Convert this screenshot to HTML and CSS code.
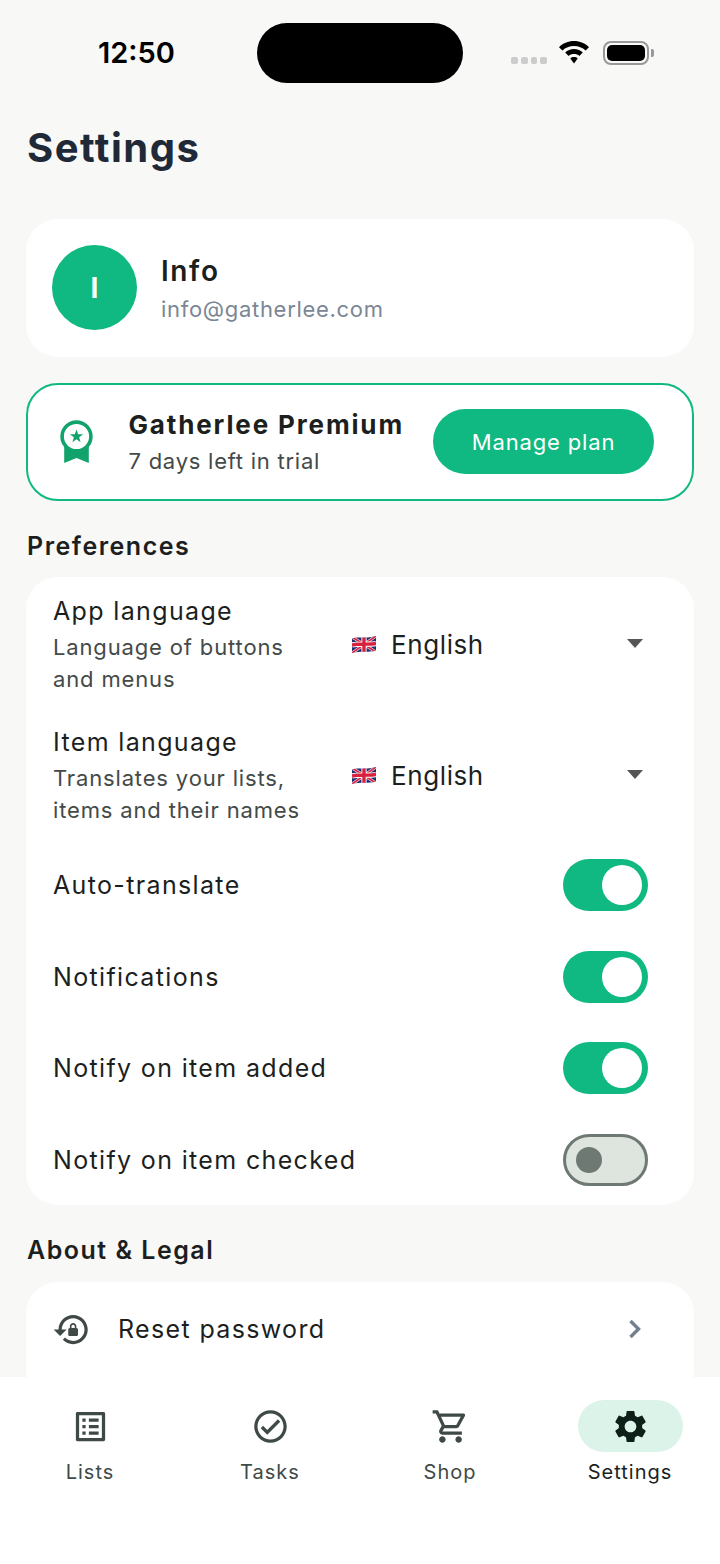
FILE: index.html
```html
<!DOCTYPE html>
<html lang="en">
<head>
  <meta charset="UTF-8">
  <title>Settings</title>
  <link rel="stylesheet" href="styles.css">
</head>
<body>
<div class="screen">
  <div class="content">
    <div class="statusBar">
      <div class="time">12:50</div>
      <div class="island"></div>
      <div class="signal"><i></i><i></i><i></i><i></i></div>
      <svg class="wifi" viewBox="0 0 32 23" width="32" height="23">
        <path d="M16 0C10 0 4.800 2.300 1 6.200l3.400 3.400C7.500 6.600 11.500 5 16 5s8.500 1.600 11.600 4.600L31 6.200C27.200 2.300 22 0 16 0z"/>
        <path d="M16 8c-3.500 0-6.500 1.300-8.800 3.500l3.400 3.400C12 13.600 13.900 13 16 13s4 .6 5.400 1.900l3.400-3.400C22.500 9.300 19.500 8 16 8z"/>
        <path d="M16 16c-1.500 0-2.800.5-3.700 1.400l3.700 5.100 3.700-5.100C18.800 16.500 17.500 16 16 16z"/>
      </svg>
      <div class="battery"><div class="batteryFill"></div></div>
      <div class="batteryCap"></div>
    </div>

    <h1 class="pageTitle">Settings</h1>

    <div class="card profile">
      <div class="avatar">I</div>
      <div>
        <div class="profileName">Info</div>
        <div class="profileMail">info@gatherlee.com</div>
      </div>
    </div>

    <div class="premium">
      <svg class="medal" viewBox="0 0 33 43" width="33" height="43">
        <path fill="#12a36c" d="M4.200 24H28.800V43L16.500 38 4.200 43z"/>
        <circle cx="16.500" cy="16.500" r="14.400" fill="#fff" stroke="#12a36c" stroke-width="3.600"/>
        <path fill="#12a36c" d="M16.500 9.500l1.650 4.730 5.010.11-3.990 3.030 1.440 4.790-4.110-2.860-4.110 2.860 1.440-4.790-3.990-3.030 5.010-.11z"/>
      </svg>
      <div class="premiumText">
        <div class="premiumName">Gatherlee Premium</div>
        <div class="premiumTrial">7 days left in trial</div>
      </div>
      <div class="planBtn">Manage plan</div>
    </div>

    <h2 class="sectionTitle">Preferences</h2>
    <div class="card prefs">
      <div class="langRow">
        <div class="langText">
          <div class="rowLabel">App language</div>
          <div class="rowHint">Language of buttons and menus</div>
        </div>
        <div class="langSelect">
          <svg class="flag" viewBox="0 0 24 17" width="24" height="17">
            <symbol id="ukFlag" viewBox="0 0 24 17">
              <clipPath id="flagShape"><path d="M0 2.500C6 .5 11 3 24 0V14.500C16 17 8 14.500 0 17z"/></clipPath>
              <g clip-path="url(#flagShape)">
                <rect width="24" height="17" fill="#1f2c72"/>
                <path d="M0 1l24 15M24 0L0 17" stroke="#f4dfe2" stroke-width="3"/>
                <path d="M0 1l24 15M24 0L0 17" stroke="#d8213f" stroke-width="1.600"/>
                <path d="M12 0v17M0 9C8 7 16 9 24 7.500" stroke="#fff" stroke-width="5.200" fill="none"/>
                <path d="M12 0v17M0 9C8 7 16 9 24 7.500" stroke="#d8213f" stroke-width="3.400" fill="none"/>
              </g>
            </symbol>
            <use href="#ukFlag"/>
          </svg>
          <span class="langName">English</span>
          <div class="caret"></div>
        </div>
      </div>
      <div class="langRow">
        <div class="langText">
          <div class="rowLabel">Item language</div>
          <div class="rowHint">Translates your lists, items and their names</div>
        </div>
        <div class="langSelect">
          <svg class="flag" viewBox="0 0 24 17" width="24" height="17"><use href="#ukFlag"/></svg>
          <span class="langName">English</span>
          <div class="caret"></div>
        </div>
      </div>
      <div class="toggleRow">
        <span class="rowLabel">Auto-translate</span>
        <div class="toggle on"><div class="knob"></div></div>
      </div>
      <div class="toggleRow">
        <span class="rowLabel">Notifications</span>
        <div class="toggle on"><div class="knob"></div></div>
      </div>
      <div class="toggleRow">
        <span class="rowLabel">Notify on item added</span>
        <div class="toggle on"><div class="knob"></div></div>
      </div>
      <div class="toggleRow">
        <span class="rowLabel">Notify on item checked</span>
        <div class="toggle"><div class="knob"></div></div>
      </div>
    </div>

    <h2 class="sectionTitle">About &amp; Legal</h2>
    <div class="card legal">
      <svg class="resetIcon" viewBox="0 0 24 24" width="39" height="39">
        <path d="M13 3c-4.970 0-9 4.030-9 9H1l4 4 4-4H6c0-3.860 3.140-7 7-7s7 3.140 7 7-3.140 7-7 7c-1.930 0-3.680-.79-4.940-2.060L6.640 18.360C8.270 20 10.510 21 13 21c4.970 0 9-4.030 9-9s-4.030-9-9-9zm2 8v-1c0-1.100-.9-2-2-2s-2 .9-2 2v1c-.55 0-1 .45-1 1v3c0 .55.45 1 1 1h4c.55 0 1-.45 1-1v-3c0-.55-.45-1-1-1zm-1 0h-2v-1c0-.55.45-1 1-1s1 .45 1 1v1z"/>
      </svg>
      <span class="rowLabel legalLabel">Reset password</span>
      <svg class="chevron" viewBox="0 0 14 22" width="14" height="22">
        <path d="M2.500 3l8 8-8 8" fill="none" stroke="#74808f" stroke-width="3.400"/>
      </svg>
    </div>
  </div>

  <div class="tabBar">
    <div class="tab">
      <div class="tabIcon">
        <svg viewBox="0 0 24 24" width="39" height="39"><path d="M19 5v14H5V5h14m1.100-2H3.900c-.5 0-.9.4-.9.9v16.200c0 .4.4.9.9.9h16.200c.4 0 .9-.5.9-.9V3.900c0-.5-.5-.9-.9-.9zM11 7h6v2h-6V7zm0 4h6v2h-6v-2zm0 4h6v2h-6zM7 7h2v2H7zm0 4h2v2H7zm0 4h2v2H7z"/></svg>
      </div>
      <div class="tabLabel">Lists</div>
    </div>
    <div class="tab">
      <div class="tabIcon">
        <svg viewBox="0 0 24 24" width="39" height="39"><path d="M12 2C6.480 2 2 6.480 2 12s4.480 10 10 10 10-4.480 10-10S17.520 2 12 2zm0 18c-4.410 0-8-3.590-8-8s3.590-8 8-8 8 3.590 8 8-3.590 8-8 8zm4.590-12.420L10 14.170l-2.590-2.580L6 13l4 4 8-8z"/></svg>
      </div>
      <div class="tabLabel">Tasks</div>
    </div>
    <div class="tab">
      <div class="tabIcon">
        <svg viewBox="0 0 24 24" width="39" height="39"><path d="M15.550 13c.75 0 1.410-.41 1.750-1.030l3.580-6.490c.37-.66-.11-1.480-.87-1.480H5.210l-.94-2H1v2h2l3.600 7.590-1.350 2.440C4.520 15.370 5.480 17 7 17h12v-2H7l1.100-2h7.450zM6.160 6h12.150l-2.760 5H8.530L6.160 6zM7 18c-1.100 0-1.990.9-1.990 2S5.900 22 7 22s2-.9 2-2-.9-2-2-2zm10 0c-1.100 0-1.990.9-1.990 2s.89 2 1.990 2 2-.9 2-2-.9-2-2-2z"/></svg>
      </div>
      <div class="tabLabel">Shop</div>
    </div>
    <div class="tab active">
      <div class="tabIcon">
        <svg viewBox="0 0 24 24" width="39" height="39"><path d="M19.140 12.940c.04-.3.06-.61.06-.94 0-.32-.02-.64-.07-.94l2.030-1.580c.18-.14.23-.41.12-.61l-1.920-3.320c-.12-.22-.37-.29-.59-.22l-2.390.96c-.5-.38-1.030-.7-1.620-.94l-.36-2.540c-.04-.24-.24-.41-.48-.41h-3.840c-.24 0-.43.17-.47.41l-.36 2.540c-.59.24-1.130.57-1.620.94l-2.390-.96c-.22-.08-.47 0-.59.22L2.740 8.870c-.12.21-.08.47.12.61l2.030 1.580c-.05.3-.09.63-.09.94s.02.64.07.94l-2.030 1.580c-.18.14-.23.41-.12.61l1.920 3.320c.12.22.37.29.59.22l2.390-.96c.5.38 1.030.7 1.620.94l.36 2.540c.05.24.24.41.48.41h3.840c.24 0 .44-.17.47-.41l.36-2.540c.59-.24 1.130-.56 1.620-.94l2.390.96c.22.08.47 0 .59-.22l1.920-3.320c.12-.22.07-.47-.12-.61l-2.010-1.580zM12 15.600c-1.980 0-3.600-1.620-3.600-3.600s1.620-3.600 3.600-3.600 3.600 1.620 3.600 3.600-1.620 3.600-3.600 3.600z"/></svg>
      </div>
      <div class="tabLabel">Settings</div>
    </div>
  </div>
</div>
</body>
</html>
```

FILE: styles.css
```css
* {
  box-sizing: border-box;
}

html, body {
  margin: 0;
  padding: 0;
}

body {
  font-family: "Inter", "Liberation Sans", sans-serif;
  color: #1c1f1e;
  background: #f8f8f6;
}

.screen {
  width: 720px;
  height: 1564px;
  display: flex;
  flex-direction: column;
  overflow: hidden;
}

.content {
  height: 1377px;
  padding: 0 26px;
  overflow: hidden;
}

/* status bar */
.statusBar {
  height: 100px;
  padding: 23px 0 0 72px;
  display: flex;
  align-items: flex-start;
}

.time {
  width: 159px;
  padding-top: 12px;
  font-size: 29px;
  line-height: 36px;
  font-weight: 600;
  color: #000;
}

.island {
  width: 206px;
  height: 60px;
  border-radius: 30px;
  background: #000;
}

.signal {
  display: flex;
  gap: 3px;
  margin: 34px 0 0 48px;
}

.signal i {
  width: 6.75px;
  height: 7px;
  border-radius: 2px;
  background: #ccc;
}

.wifi {
  margin: 18px 0 0 11px;
  fill: #000;
}

.battery {
  width: 46px;
  height: 24px;
  margin: 18px 0 0 13px;
  padding: 2px;
  border: 2px solid #999;
  border-radius: 8px;
}

.batteryFill {
  height: 100%;
  border-radius: 5px;
  background: #000;
}

.batteryCap {
  width: 3px;
  height: 8px;
  margin: 26px 0 0 2px;
  border-radius: 0 2px 2px 0;
  background: #999;
}

.pageTitle {
  margin: 0 0 47px 1px;
  height: 72px;
  padding-top: 24px;
  font-size: 40px;
  line-height: 48px;
  font-weight: 700;
  letter-spacing: 1.5px;
  color: #1f2937;
}

.card {
  background: #fff;
  border-radius: 32px;
}

/* profile */
.profile {
  height: 138px;
  padding: 0 26px;
  display: flex;
  align-items: center;
  gap: 24px;
}

.avatar {
  width: 85px;
  height: 85px;
  margin-top: -1px;
  border-radius: 50%;
  background: #10b981;
  color: #fff;
  font-size: 28px;
  font-weight: 700;
  display: flex;
  align-items: center;
  justify-content: center;
}

.profileName {
  font-size: 28px;
  line-height: 36px;
  font-weight: 600;
  letter-spacing: 1.6px;
}

.profileMail {
  margin-top: 5px;
  font-size: 22px;
  line-height: 30px;
  letter-spacing: .7px;
  color: #7b8694;
}

/* premium banner */
.premium {
  height: 117.5px;
  margin-top: 26px;
  padding: 0 38px 0 32px;
  display: flex;
  align-items: center;
  background: #fff;
  border: 2.5px solid #10b981;
  border-radius: 32px;
}

.medal {
  flex: none;
}

.premiumText {
  flex: 1;
  margin-left: 35.5px;
  padding-top: 2px;
}

.premiumName {
  font-size: 26px;
  line-height: 32px;
  font-weight: 700;
  letter-spacing: 1.85px;
}

.premiumTrial {
  margin-top: 5px;
  font-size: 22px;
  line-height: 30px;
  letter-spacing: .75px;
  color: #444a48;
}

.planBtn {
  width: 221px;
  height: 65px;
  border-radius: 33px;
  background: #10b981;
  color: #fff;
  font-size: 22px;
  font-weight: 400;
  letter-spacing: .85px;
  display: flex;
  align-items: center;
  justify-content: center;
}

.sectionTitle {
  margin: 0;
  height: 76.5px;
  padding: 29px 0 0 1px;
  font-size: 25px;
  line-height: 32px;
  font-weight: 600;
  letter-spacing: 1.5px;
  color: #1c1f1e;
}

/* preferences */
.prefs {
  height: 628px;
  padding: 19px 46px 0 27px;
}

.langRow {
  height: 99px;
  margin-bottom: 32px;
  display: flex;
}

.langRow:nth-child(2) {
  margin-bottom: 33px;
}

.langText {
  width: 272px;
}

.rowLabel {
  font-size: 25px;
  line-height: 30px;
  letter-spacing: 1.35px;
  color: #1c1f1e;
}

.rowHint {
  margin-top: 5px;
  font-size: 22px;
  line-height: 32px;
  letter-spacing: .85px;
  color: #444a48;
}

.langSelect {
  flex: 1;
  display: flex;
  align-items: center;
  height: 98px;
  margin: -1px 0 0 27px;
}

.flag {
  flex: none;
}

.langName {
  flex: 1;
  margin-left: 15px;
  font-size: 26px;
  letter-spacing: .6px;
}

.caret {
  width: 0;
  height: 0;
  margin: -2px 5px 0 0;
  border-style: solid;
  border-width: 9px 8px 0;
  border-color: #555 transparent transparent;
}

.toggleRow {
  height: 52px;
  margin-bottom: 39.7px;
  display: flex;
  align-items: center;
  justify-content: space-between;
}

.toggle {
  width: 85px;
  height: 52px;
  padding: 0 10px;
  border: 3px solid #6f7974;
  border-radius: 26px;
  background: #dee4de;
  display: flex;
  align-items: center;
}

.knob {
  width: 26px;
  height: 26px;
  border-radius: 50%;
  background: #6f7974;
}

.toggle.on {
  padding: 0 6px;
  border: 0;
  background: #10b981;
  justify-content: flex-end;
}

.toggle.on .knob {
  width: 40px;
  height: 40px;
  background: #fff;
}

/* about */
.legal {
  height: 120px;
  padding: 28px 52px 0 26px;
  display: flex;
  align-items: flex-start;
}

.resetIcon {
  fill: #3f4a46;
  flex: none;
}

.legalLabel {
  flex: 1;
  margin: 4px 0 0 27px;
}

.chevron {
  margin-top: 8px;
}

/* bottom tabs */
.tabBar {
  height: 187px;
  padding-top: 23px;
  display: flex;
  background: #fff;
}

.tab {
  width: 180px;
  display: flex;
  flex-direction: column;
  align-items: center;
}

.tabIcon {
  width: 105px;
  height: 52px;
  border-radius: 26px;
  display: flex;
  align-items: center;
  justify-content: center;
  fill: #3f4a46;
}

.tabLabel {
  margin-top: 8px;
  font-size: 20px;
  line-height: 24px;
  font-weight: 400;
  letter-spacing: 1px;
  color: #3f4a46;
}

.tab.active .tabIcon {
  background: #dcf3ea;
  fill: #0d1f18;
}

.tab.active .tabLabel {
  color: #1c1f1e;
}
```
